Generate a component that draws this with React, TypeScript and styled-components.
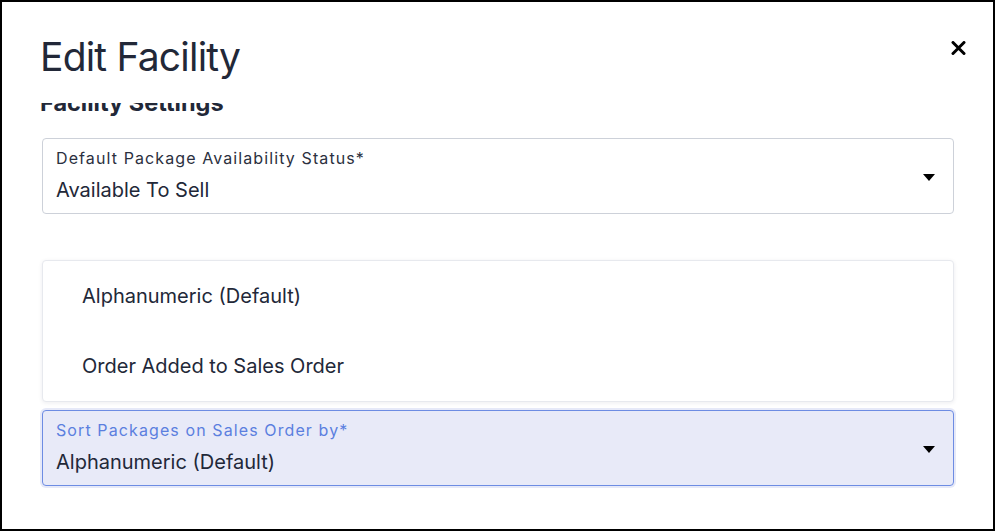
import React, { useLayoutEffect, useRef } from 'react';
import styled, { createGlobalStyle } from 'styled-components';

const TEXT = '#222838';
const LABEL = '#2b3040';
const BORDER = '#cdd1d9';
const FOCUS_BORDER = '#6d8ce3';
const FOCUS_BG = '#e8eaf8';
const FOCUS_LABEL = '#5b7fdf';

const GlobalStyle = createGlobalStyle`
  html, body { margin: 0; padding: 0; background: #fff; }
  body { font-family: Inter, "Noto Sans", "Liberation Sans", sans-serif; color: ${TEXT}; }
  * { box-sizing: border-box; }
`;

const Frame = styled.div`
  width: 995px; height: 531px; border: 2px solid #000; background: #fff;
  display: flex; flex-direction: column; overflow: hidden;
`;
const Header = styled.div`
  display: flex; justify-content: space-between; align-items: flex-start;
  height: 101px; padding: 32px 27px 0 38px; flex-shrink: 0;
`;
const Title = styled.h1`
  margin: 0; font-size: 39px; line-height: 46px; font-weight: 400; letter-spacing: -0.8px; color: ${TEXT};
`;
const CloseBtn = styled.button`
  margin-top: 7px; width: 15px; height: 14px; padding: 0; border: 0; background: none; cursor: pointer;
  display: flex; align-items: center; justify-content: center;
  svg { display: block; }
`;
const Body = styled.div`
  flex: 1; overflow: hidden; padding: 16px 39px 80px 40px;
`;
const SectionTitle = styled.h2`
  margin: 0 0 20px -2px; font-size: 23.5px; line-height: 30px; font-weight: 700; color: ${TEXT};
`;
const FieldWrap = styled.div<{ $gapTop?: number }>`
  position: relative; margin-top: ${p => p.$gapTop ?? 0}px;
`;
const SelectBox = styled.div<{ $focused?: boolean }>`
  position: relative; height: 76px; padding: 9px 50px 9px 13px; border-radius: 4px;
  border: 1px solid ${p => p.$focused ? FOCUS_BORDER : BORDER};
  background: ${p => p.$focused ? FOCUS_BG : '#fff'};
  box-shadow: ${p => p.$focused ? '0 0 0 2px #e6e9f8' : 'none'};
  cursor: pointer;
`;
const FieldLabel = styled.div<{ $focused?: boolean }>`
  font-size: 16px; line-height: 20px; letter-spacing: 1.1px; margin-bottom: 8px;
  color: ${p => p.$focused ? FOCUS_LABEL : LABEL};
`;
const FieldValue = styled.div`
  font-size: 20px; line-height: 28px; color: ${TEXT}; white-space: nowrap;
`;
const Caret = styled.span`
  position: absolute; right: 18px; top: 50%; margin-top: -2px;
  width: 0; height: 0; border-left: 6.5px solid transparent; border-right: 6.5px solid transparent; border-top: 7px solid #000;
`;
const Menu = styled.ul`
  position: absolute; left: 0; right: 0; bottom: calc(100% + 8px); margin: 0; padding: 0; list-style: none;
  background: #fff; border: 1px solid #e7e9ee; border-radius: 4px;
  box-shadow: 0 1px 4px rgba(20, 30, 60, 0.08);
`;
const MenuItem = styled.li`
  height: 70px; display: flex; align-items: center; padding-left: 39px;
  font-size: 20px; line-height: 24px; color: ${TEXT}; cursor: pointer;
  &:hover { background: #f4f5fb; }
`;

const Field: React.FC<{ label: string; value: string; focused?: boolean }> = ({ label, value, focused }) => (
  <SelectBox $focused={focused}>
    <FieldLabel $focused={focused}>{label}</FieldLabel>
    <FieldValue>{value}</FieldValue>
    <Caret />
  </SelectBox>
);

export default function App() {
  const bodyRef = useRef<HTMLDivElement>(null);

  // the modal body is shown scrolled a little, so the section heading sits under the header
  useLayoutEffect(() => {
    if (bodyRef.current) bodyRef.current.scrollTop = 31;
  }, []);

  return (
    <>
      <GlobalStyle />
      <Frame role="dialog" aria-labelledby="edit-facility-title">
        <Header>
          <Title id="edit-facility-title">Edit Facility</Title>
          <CloseBtn aria-label="Close">
            <svg width="15" height="14" viewBox="0 0 15 14">
              <path d="M2 1.5 L13 12.5 M13 1.5 L2 12.5" stroke="#000" strokeWidth="3" strokeLinecap="round" />
            </svg>
          </CloseBtn>
        </Header>
        <Body ref={bodyRef}>
          <SectionTitle>Facility Settings</SectionTitle>
          <FieldWrap>
            <Field label="Default Package Availability Status*" value="Available To Sell" />
          </FieldWrap>
          <FieldWrap $gapTop={196}>
            <Menu role="listbox">
              <MenuItem role="option" aria-selected>Alphanumeric (Default)</MenuItem>
              <MenuItem role="option">Order Added to Sales Order</MenuItem>
            </Menu>
            <Field focused label="Sort Packages on Sales Order by*" value="Alphanumeric (Default)" />
          </FieldWrap>
        </Body>
      </Frame>
    </>
  );
}
